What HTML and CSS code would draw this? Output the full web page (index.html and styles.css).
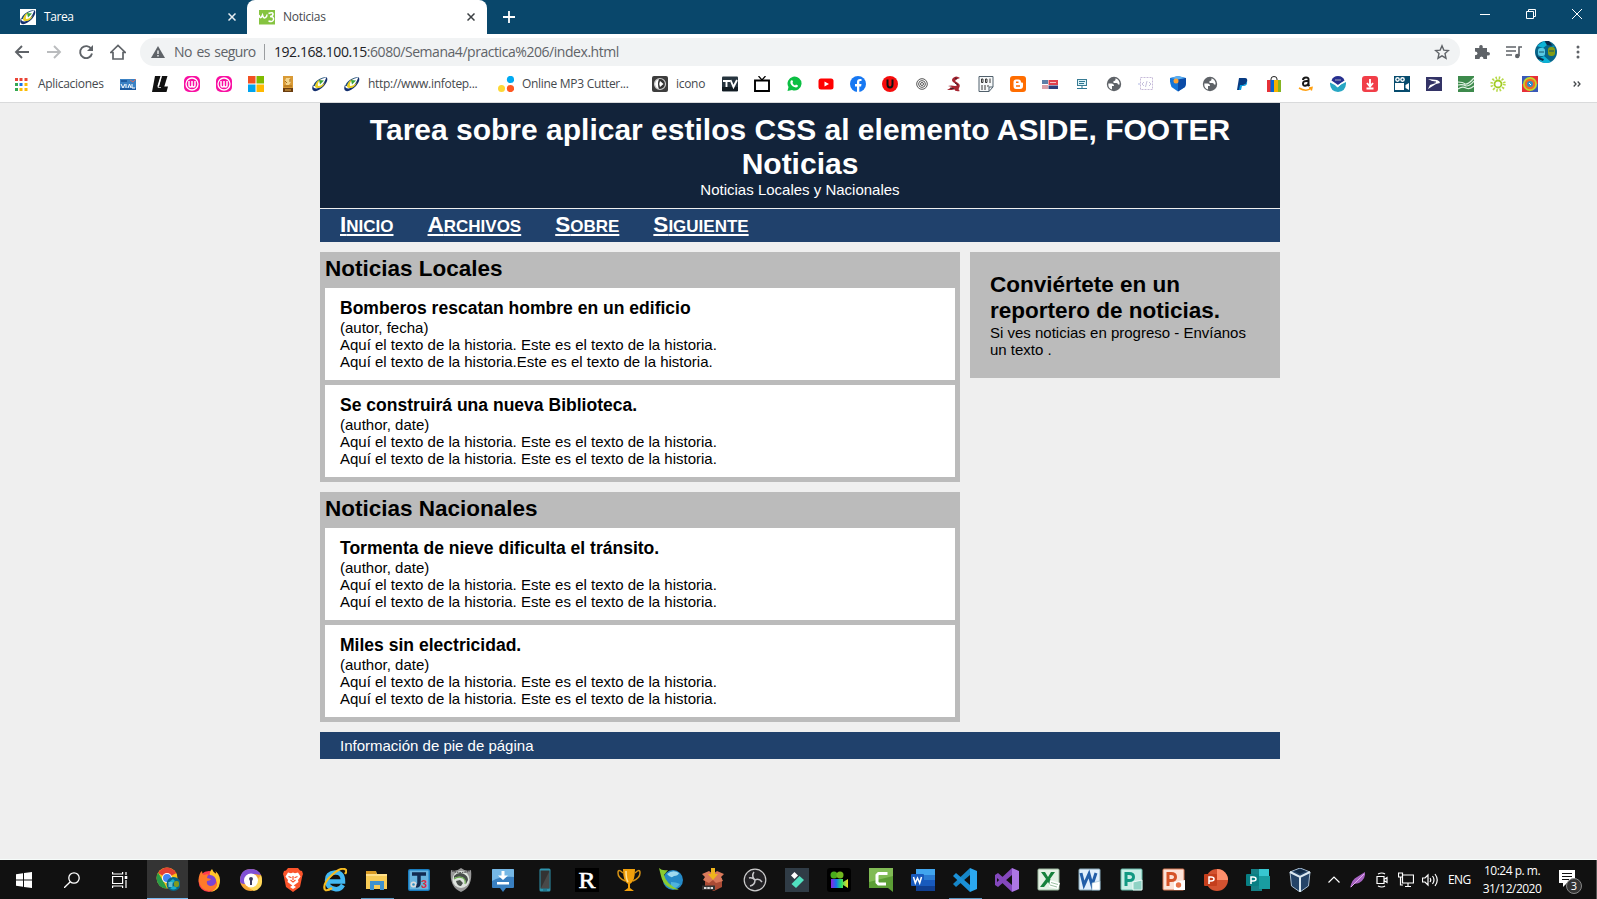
FILE: index.html
```html
<!DOCTYPE html>
<html lang="es">
<head>
<meta charset="utf-8">
<title>Noticias</title>
<link rel="stylesheet" href="styles.css">
</head>
<body>
<svg class="defs" width="0" height="0">
  <symbol id="infotep" viewBox="0 0 16 16"><path d="M14.500 1Q17 4 12 10 6 16 2 15-1 14 1 9q0 4 4 3.500Q11 11 14.500 1" fill="#14306f"/><path d="M1 10Q3 4 11 1.500q3-.5 3.500 0Q6 3 4 8q-1 3-3 2" fill="#1d4d78"/><path d="M3 10q1-5 6-7-4 4-3 7 4 0 7-4-2 6-7 6-3 0-3-2" fill="#e9cf22"/><path d="M7 4l5 .5-4 4z" fill="#3aa63a"/></symbol>
  <symbol id="wamp" viewBox="0 0 16 16"><rect width="16" height="16" rx="5" fill="#f90fa2"/><circle cx="8" cy="8" r="6" fill="none" stroke="#fff" stroke-width="1.3"/><path d="M5 5v4q0 2 1.500 2T8 9V5v4q0 2 1.500 2T11 9V5" fill="none" stroke="#fff" stroke-width="1.500"/></symbol>
  <symbol id="globe" viewBox="0 0 16 16"><circle cx="8" cy="8" r="7.200" fill="#5f6368"/><path d="M2.300 7.500h3.200q2.500 0 2.500 2.500H6v3.500Q2 12.500 2.300 7.500M9.500 2.300v1.200q0 1.500-2 1.500v2h3q1.500 0 1.500 1.500h1.600Q14 4 9.500 2.300" fill="#fff"/></symbol>
</svg>
<div class="browser">
  <div class="tabs">
    <div class="tab">
      <svg class="i16" viewBox="0 0 16 16"><rect width="16" height="16" fill="#fff"/><use href="#infotep"/></svg>
      <span class="tab-title">Tarea</span>
      <svg class="tab-x light" viewBox="0 0 8 8"><path d="M.5.5l7 7m0-7l-7 7"/></svg>
    </div>
    <div class="tab active">
      <svg class="i16" viewBox="0 0 16 16"><rect width="16" height="14.500" y="1" fill="#86c440"/><path d="M0 6q1 4 2.500 2l1-2q1 4 3 2.500Q8 8 8 5.500M9.500 4.500q5-2 4.500 1-.5 2-3 2 4 0 3.500 3T9.500 12" fill="none" stroke="#fff" stroke-width="1.500"/></svg>
      <span class="tab-title">Noticias</span>
      <svg class="tab-x" viewBox="0 0 8 8"><path d="M.5.5l7 7m0-7l-7 7"/></svg>
    </div>
    <svg class="plus" viewBox="0 0 12 12"><path d="M6 0v12M0 6h12" stroke="#fff" stroke-width="1.800"/></svg>
    <div class="winbtns">
      <svg viewBox="0 0 10 10"><path d="M0 5.500h10"/></svg>
      <svg viewBox="0 0 10 10"><path d="M.5 2.500h7v7h-7zM2.500 2.500v-2h7v7h-2"/></svg>
      <svg viewBox="0 0 10 10"><path d="M0 0l10 10m0-10L0 10"/></svg>
    </div>
  </div>
  <div class="toolbar">
    <svg class="nav-i" viewBox="0 0 16 16"><path d="M15 8H2m6-6L2 8l6 6"/></svg>
    <svg class="nav-i dim" viewBox="0 0 16 16"><path d="M1 8h13M8 2l6 6-6 6"/></svg>
    <svg class="nav-i" viewBox="0 0 16 16"><path d="M13.300 5A6 6 0 1 0 14 9.500"/><path d="M15 1v6H9z" fill="#5f6368" stroke="none"/></svg>
    <svg class="nav-i" viewBox="0 0 16 16"><path d="M.7 8.500L8 1.500l7.300 7H13V15H3V8.500z" stroke-width="1.700"/></svg>
    <div class="omnibox">
      <svg class="warn" viewBox="0 0 14 12"><path d="M7 0l7 12H0z" fill="#5f6368"/><path d="M7 4.500v3.500M7 9v1.500" stroke="#f1f3f4" stroke-width="1.400"/></svg>
      <span class="secure">No es seguro</span>
      <span class="sep"></span>
      <span class="url"><b>192.168.100.15</b>:6080/Semana4/practica%206/index.html</span>
      <svg class="star" viewBox="0 0 16 16"><path d="M8 1.800l1.800 4.300 4.700.4-3.500 3.100 1 4.600L8 11.800l-4 2.400 1-4.600L1.500 6.500l4.700-.4z" fill="none" stroke="#5f6368" stroke-width="1.400"/></svg>
    </div>
    <svg class="act" viewBox="0 0 16 16"><path d="M1 4h4.300Q4.800 1 7 1t1.700 3H13v4q3-.4 3 1.700T13 11.500V15H9.500q0-2.500-2-2.500T5.500 15H1v-3.800q2.500 0 2.500-1.800T1 7.500z" fill="#5f6368"/></svg>
    <svg class="act" viewBox="0 0 16 16"><path d="M0 3h10M0 7h10M0 11h6M13 12V3h3" fill="none" stroke="#5f6368" stroke-width="1.600"/><circle cx="11.300" cy="12" r="2.300" fill="#5f6368"/></svg>
    <svg class="avatar" viewBox="0 0 22 22"><circle cx="11" cy="11" r="11" fill="#07658a"/><path d="M2 5l7-5 3 4-4 3zM3 18l6-3 7 6q-8 3-13-3M15 2l5 4-4-1z" fill="#0cb3d6"/><path d="M10 0h4l4 5-6-1zM1 12l2 4 6 2-1 2-5-2z" fill="#092948"/><rect x="3" y="7" width="7" height="8" rx="2.500" fill="#58c9e3"/><rect x="13" y="6" width="7" height="9" rx="3" fill="#839d16"/><path d="M4 11h5M14 10h5" stroke="#14576a" fill="none"/></svg>
    <svg class="dots" viewBox="0 0 4 14"><circle cx="2" cy="2" r="1.500"/><circle cx="2" cy="7" r="1.500"/><circle cx="2" cy="12" r="1.500"/></svg>
  </div>
  <div class="bookmarks">
    <div class="bm apps"><svg viewBox="0 0 16 16"><path d="M2 3.500h3" stroke="#ea4335" stroke-width="3"/><path d="M6.500 3.500h3M11.500 3.500h3" stroke="#ea4335" stroke-width="3"/><path d="M2 8.500h3" stroke="#34a853" stroke-width="3"/><path d="M6.500 8.500h3" stroke="#1a73e8" stroke-width="3"/><path d="M11.500 8.500h3" stroke="#fbbc04" stroke-width="3"/><path d="M2 13.500h3" stroke="#34a853" stroke-width="3"/><path d="M6.500 13.500h3M11.500 13.500h3" stroke="#fbbc04" stroke-width="3"/></svg><span>Aplicaciones</span></div>
    <svg viewBox="0 0 16 16"><rect y="3" width="16" height="11" fill="#3b82c4"/><path d="M0 13h16M1 5h6" stroke="#1d5ba0" stroke-width="2"/><path d="M1 8l2 4 2-4M6 8v4M8 12l1.500-4L11 12M12 8v4h3" stroke="#fff" fill="none"/><path d="M10 4l3 2 3-3" stroke="#d56c62" fill="none"/></svg>
    <svg viewBox="0 0 16 16"><path d="M3 0h5.500L5.300 10.500H7L10 0h5.500l-3.200 10.500H16L14.500 16H0z" fill="#111"/><path d="M9 1L6 11.500h3" stroke="#fff" stroke-width=".7" fill="none"/></svg>
    <svg><use href="#wamp"/></svg>
    <svg><use href="#wamp"/></svg>
    <svg viewBox="0 0 16 16"><path fill="#f25022" d="M0 0h7.500v7.500H0z"/><path fill="#7fba00" d="M8.500 0H16v7.500H8.500z"/><path fill="#00a4ef" d="M0 8.500h7.500V16H0z"/><path fill="#ffb900" d="M8.500 8.500H16V16H8.500z"/></svg>
    <svg viewBox="0 0 16 16"><rect x="3" width="10" height="16" fill="#d99a35"/><path d="M6 2h4l1 4-2 3H6L5 5z" fill="#f4d58d"/><path d="M4 10h8M5 5l2 2M10 3v3" stroke="#a66b18"/><path d="M3 12h10v4H3z" fill="#6b3d10"/><path d="M5 14h6" stroke="#e6b04a"/></svg>
    <svg><use href="#infotep"/></svg>
    <div class="bm infotep"><svg><use href="#infotep"/></svg><span>http://www.infotep...</span></div>
    <div class="bm mp3"><svg viewBox="0 0 16 16"><circle cx="12.500" cy="3.500" r="3.600" fill="#00aaf2"/><circle cx="3.500" cy="12.500" r="3.500" fill="#fdd835"/><circle cx="12.500" cy="12.500" r="3.600" fill="#ff5722"/></svg><span>Online MP3 Cutter...</span></div>
    <div class="bm icono"><svg viewBox="0 0 16 16"><rect width="16" height="16" rx="2" fill="#3d3d3d"/><circle cx="8" cy="8" r="5.500" fill="#333" stroke="#ccc" stroke-width="1.200"/><path d="M7 3Q5 8 7 13 3 12 3 8t4-5" fill="#fff"/><path d="M8 5l3.500 3L8 11q-1.500-3 0-6" fill="#fff"/></svg><span>icono</span></div>
    <svg viewBox="0 0 16 16"><rect width="16" height="15" y=".5" rx="1" fill="#26343e"/><rect y="11" width="16" height="4" fill="#111b22"/><path d="M1 5h7M4.500 5v6M8.500 4l3 7 3.500-7" stroke="#fff" stroke-width="1.900" fill="none"/></svg>
    <svg viewBox="0 0 16 16"><path d="M1 4.500h14v10.500H1z" fill="none" stroke="#000" stroke-width="1.900"/><path d="M4.500 0L8 4l3.500-4" fill="none" stroke="#000" stroke-width="1.200"/></svg>
    <svg viewBox="0 0 16 16"><path d="M1.500 15l1-4A7 7 0 1 1 6 14z" fill="#0bbf43"/><path d="M5 4.500q1.500-1 2 1L6.500 7q1 2 2.500 2.500l1-1 2 1q0 2-2 2-4-.5-5.500-4-.5-2 .5-3" fill="#fff"/></svg>
    <svg viewBox="0 0 16 16"><rect x=".5" y="2.500" width="15" height="11" rx="2.500" fill="#f00"/><path d="M6.500 5.500v5L11 8z" fill="#fff"/></svg>
    <svg viewBox="0 0 16 16"><circle cx="8" cy="8" r="8" fill="#1778f2"/><path d="M7 16v-5.500H5V8h2V6q0-3 3-3h1.500v2H10Q9.300 5 9.300 6v2h2.200l-.4 2.500H9.300V16z" fill="#fff"/></svg>
    <svg viewBox="0 0 16 16"><circle cx="8" cy="8" r="8" fill="#f60c0c"/><path d="M5.500 3.500v5q0 3 2.500 3t2.500-3v-5" stroke="#111" stroke-width="2" fill="none"/></svg>
    <svg viewBox="0 0 16 16" fill="none" stroke="#555"><circle cx="8" cy="8" r="5.300"/><circle cx="8" cy="8" r="3.400"/><circle cx="8" cy="8" r="1.500"/></svg>
    <svg viewBox="0 0 16 16"><path d="M14 2Q10-1 7 2 5 4 7 6l3 2q2 2-1 2-4-1-7 0l4 1-5 3h5l2-1q1 3 6 2-2-1-1-3 2-3-1-5L9 5q1-2 5-3" fill="#a72531"/><path d="M9 2l2 1M4 12l4 1M9 7l3 2" stroke="#391b24"/></svg>
    <svg viewBox="0 0 16 16"><path d="M1 .5h14V11l-4 4.500H1z" fill="#f7f9fa" stroke="#51606c"/><path d="M11 15.500V11h4" fill="none" stroke="#51606c"/><path d="M3.500 3h1.500v3.500H3.500zM7.500 3H9v3.500H7.500zM12 2.500V7M4 9v5M7 9v5M10 9v2" stroke="#222" stroke-width=".9" fill="none"/></svg>
    <svg viewBox="0 0 16 16"><rect width="16" height="16" rx="3" fill="#ff6d00"/><path d="M3.500 6q0-2.500 2.500-2.500h2.500Q11 3.500 11 6.500h1q1 0 1 1V10q0 3-3 3H6q-2.500 0-2.500-3z" fill="#fff"/><path d="M6 6.300h2.500M6 10h4" stroke="#ff6d00" stroke-width="1.500"/></svg>
    <svg viewBox="0 0 16 16"><path d="M0 4h6v4H0z" fill="#5d7fa8"/><path d="M6.500 4H16v5H6.500z" fill="#e0424d"/><path d="M0 9h6v4H0z" fill="#dba0a8"/><path d="M6.500 9.500H16v3.500H6.500z" fill="#2d3f7c"/><path d="M8 6.500h6" stroke="#f6c4c8"/></svg>
    <svg viewBox="0 0 16 16"><rect x="3.500" y="3.500" width="9" height="6" fill="#dcf3f8" stroke="#397c94"/><path d="M5 5.500h6M5 7.500h5M8 10v3M3 12.500h10" stroke="#2d7691" fill="none"/></svg>
    <svg><use href="#globe"/></svg>
    <svg viewBox="0 0 16 16" fill="none"><rect x="2.500" y="1.500" width="12" height="12" stroke="#c6bad9" stroke-dasharray="2 1"/><path d="M6 6L4 8l2 2M11 6l2 2-2 2M9 5l-1.500 6" stroke="#c5c0dc"/><path d="M0 8h2" stroke="#b0b9e4"/></svg>
    <svg viewBox="0 0 16 16"><path d="M0 2l8-2 8 2q1 4-1 9l-7 4.500L1.500 11Q-.5 6 0 2" fill="#1776d8"/><path d="M8 3l8-1q1 4-1 9l-7 4.500z" fill="#0c4ca7"/><path d="M1 2l7-2 7 2-7 1.500z" fill="#5cb0f2"/><circle cx="6" cy="5" r="2.500" fill="#ffa333"/></svg>
    <svg><use href="#globe"/></svg>
    <svg viewBox="0 0 16 16"><path d="M5 2h6q3 0 2 4-1 3-4 3H7l-1 5H3z" fill="#083b82"/><path d="M13 5q1 5-4 5H8l-1 4H5l1-5h3q3 0 4-4" fill="#079cde"/></svg>
    <svg viewBox="0 0 16 16"><path d="M5 5V3q0-2.500 3-2.500T11 3v2" fill="none" stroke="#222"/><path d="M1 4h4v12H1z" fill="#e63138"/><path d="M4.500 4H8v12H4.500z" fill="#0864d3"/><path d="M8 4h4v12H8z" fill="#f6b200"/><path d="M12 4h3v12h-3z" fill="#84b522"/></svg>
    <svg viewBox="0 0 16 16"><path d="M5 4q0-2.500 3-2.500T10.500 4v5l1 1M10 5q-5-.5-5 2.500T8 9.500q2.500 0 2.500-3" fill="none" stroke="#171717" stroke-width="2"/><path d="M1 12q7 4 12 .5M11 12l3-.5-.7 3" fill="none" stroke="#ffa011" stroke-width="1.500"/></svg>
    <svg viewBox="0 0 16 16"><path d="M1.500 4.500Q3 0 8 0t6.500 4.500L8 9z" fill="#262f8f"/><path d="M0 6l4 1.500 4 3.500 3-2.500L16 6q.5 9-8 10Q-.5 15 0 6" fill="#28a7c4"/><path d="M0 5q4 1 7.500 4.500Q11 6 16 5q-5 2.500-8.500 6.500Q4 8 0 6.500" fill="#fff"/><path d="M5 4h6" stroke="#aab" /></svg>
    <svg viewBox="0 0 16 16"><rect width="16" height="16" rx="3" fill="#f13e48"/><path d="M8 3v7M5 7l3 3.500L11 7M4.500 12.500h7" stroke="#fff" stroke-width="1.900" fill="none"/></svg>
    <svg viewBox="0 0 16 16"><rect width="16" height="16" fill="#064b6d"/><g fill="none" stroke="#fff" stroke-width="1.400"><circle cx="3.500" cy="3.500" r="1.700"/><circle cx="8.500" cy="3.500" r="1.700"/></g><path d="M1 7h9v7H1zM11.500 9L15 7v7l-3.500-2z" fill="#fff"/></svg>
    <svg viewBox="0 0 16 16"><rect width="16" height="14" y="1" fill="#333366"/><path d="M2 3l9 1q3 1 3 3l-4 1-8 5 2-4 6-2z" fill="#fff"/><path d="M4 5.300l6 .7" stroke="#333366"/></svg>
    <svg viewBox="0 0 16 16"><rect width="16" height="16" fill="#3d8a4c"/><path d="M0 6q5 0 7 2 3 1 9-6M0 9q5-1 8 1 4 0 8-5M0 13q4-3 8-1t8-2" stroke="#dff0e2" stroke-width="1.200" fill="none"/></svg>
    <svg viewBox="0 0 16 16" fill="none"><circle cx="8" cy="8" r="3.500" stroke="#9fca22" stroke-width="1.800"/><circle cx="8" cy="8" r="6.300" stroke="#b7d947" stroke-width="2.800" stroke-dasharray="1.500 1.800"/></svg>
    <svg viewBox="0 0 16 16"><path d="M0 0h8v8H0zM8 8h8v8H8z" fill="#3959b8"/><path d="M8 0h8v8H8zM0 8h8v8H0z" fill="#e72f39"/><circle cx="8" cy="8" r="7" fill="#c3d92b"/><circle cx="8" cy="8" r="5.300" fill="#f06b24"/><circle cx="8" cy="8" r="3" fill="#2e8bc8"/><path d="M7 7l2 2" stroke="#fff"/></svg>
    <svg class="more" viewBox="0 0 8 6"><path d="M.7.5L3 3 .7 5.500M4.700.5L7 3 4.700 5.500"/></svg>
  </div>
</div>

<div class="page">
  <div class="container">
    <header class="site-header">
      <h1>Tarea sobre aplicar estilos CSS al elemento ASIDE, FOOTER<br>Noticias</h1>
      <p>Noticias Locales y Nacionales</p>
    </header>
    <nav class="site-nav"><a>Inicio</a><a>Archivos</a><a>Sobre</a><a>Siguiente</a></nav>
    <div class="columns">
      <main>
        <section>
          <h2>Noticias Locales</h2>
          <article><h3>Bomberos rescatan hombre en un edificio</h3><p>(autor, fecha)</p><p>Aquí el texto de la historia. Este es el texto de la historia.</p><p>Aquí el texto de la historia.Este es el texto de la historia.</p></article>
          <article><h3>Se construirá una nueva Biblioteca.</h3><p>(author, date)</p><p>Aquí el texto de la historia. Este es el texto de la historia.</p><p>Aquí el texto de la historia. Este es el texto de la historia.</p></article>
        </section>
        <section>
          <h2>Noticias Nacionales</h2>
          <article><h3>Tormenta de nieve dificulta el tránsito.</h3><p>(author, date)</p><p>Aquí el texto de la historia. Este es el texto de la historia.</p><p>Aquí el texto de la historia. Este es el texto de la historia.</p></article>
          <article><h3>Miles sin electricidad.</h3><p>(author, date)</p><p>Aquí el texto de la historia. Este es el texto de la historia.</p><p>Aquí el texto de la historia. Este es el texto de la historia.</p></article>
        </section>
      </main>
      <aside>
        <h2>Conviértete en un reportero de noticias.</h2>
        <p>Si ves noticias en progreso - Envíanos un texto .</p>
      </aside>
    </div>
    <footer>Información de pie de página</footer>
  </div>
</div>

<div class="taskbar">
  <div class="sys">
    <div><svg class="i16" viewBox="0 0 16 16"><path d="M0 2.200l7-1v6.300H0zM8 1l8-1v7.500H8zM0 8.500h7v6.300l-7-1zM8 8.500h8V16l-8-1z" fill="#fff"/></svg></div>
    <div><svg class="i16" viewBox="0 0 16 16" fill="none" stroke="#fff" stroke-width="1.300"><circle cx="10" cy="6" r="5.200"/><path d="M6.300 9.700L0 16"/></svg></div>
    <div><svg class="i16" viewBox="0 0 16 16" fill="none" stroke="#fff" stroke-width="1.200"><path d="M.6 4.500h10v7H.6zM.6 0v2h10V0M.6 16v-2h10v2M14 0v3M14 8v8"/><path d="M14 4v3" stroke-width="2.600"/></svg></div>
  </div>
  <div class="apps-row">
    <div class="current"><svg viewBox="0 0 24 24"><circle cx="11" cy="11" r="10.500" fill="#fbc116"/><path d="M11 11L2 6Q6 .5 11 .5T20.500 6z" fill="#e34133"/><path d="M2 5.500l6 10 3 6Q1 21 .5 11 .5 8 2 5.500" fill="#299b48"/><circle cx="11" cy="11" r="5" fill="#fff"/><circle cx="11" cy="11" r="4" fill="#4285f4"/><circle cx="17.500" cy="17" r="7" fill="#086687"/><path d="M12 16l5-4 2 2-3 3zM14 21l4-2 3 2q-4 3-7 0" fill="#16b0cf"/><rect x="18" y="14" width="5" height="6" rx="2" fill="#819a1e"/><rect x="12.500" y="15" width="4" height="5" fill="#64bdd1"/></svg></div>
    <div><svg viewBox="0 0 24 24"><circle cx="12" cy="13.500" r="10.500" fill="#ff3d50"/><path d="M15 1q1 3 4 5 0-2-.5-3Q24 8 22.800 15q-1 8-9.500 9 7-3 6.500-9-.5-6-6.800-7.500Q12 4 15 1" fill="#ffc629"/><circle cx="13" cy="13" r="6" fill="#7b45d2"/><path d="M1.500 12Q2 5 5 3q0 3 2 4l4-1-1 4 4 1q-1 2-4 2-1 4 3 5 5 0 6.500-4 1 9-7.500 9Q3 22 1.500 12" fill="#ff7a2a"/></svg></div>
    <div><svg viewBox="0 0 24 24"><circle cx="12" cy="12" r="11" fill="#f5a536"/><path d="M1 13Q1 1 12 1q7 0 10 6l-7-1Q5 5 6 16 1 16 1 13" fill="#804fd4"/><path d="M22 7q4 13-7 16l-7-4q9 2 11-8z" fill="#ffd85a"/><circle cx="12" cy="12.500" r="7" fill="#fff"/><path d="M12 9q2 0 2 2l-1 2v4h-2v-4l-1-2q0-2 2-2" fill="#3b395b"/></svg></div>
    <div><svg viewBox="0 0 24 24"><path d="M7 0h10l2 2.500 2 .5 1 3-.7 2L19 19l-7 5-7-5L2.700 8 2 6l1-3 2-.5z" fill="#fb542b"/><path d="M7 4.500l3 .7 2-.7 2 .7 3-.7 2.500 4L17 12l.5 2-5.500 4-5.500-4 .5-2-2.500-3.500zM12 17l3 2-3 2-3-2z" fill="#fff"/><path d="M7.500 8.500l3 1.200M16.500 8.500l-3 1.200M12 8v4M9.500 12l2.500 2 2.500-2" stroke="#fb542b" stroke-width="1.200" fill="none"/></svg></div>
    <div><svg viewBox="0 0 24 24"><path d="M20 17Q17 22 12 21 4 20 4 12.500T12 4.500t8 9H6" fill="none" stroke="#42b8f2" stroke-width="4.500"/><path d="M2 22Q-1 16 9 7t14-5q1 1-1 4M2 22q3 1 7-2" fill="none" stroke="#f5bc23" stroke-width="2.200"/></svg></div>
    <div class="running"><svg viewBox="0 0 24 24"><path d="M1 3h10l1 3h10v15H1z" fill="#f7cb57"/><path d="M1 3h10v3H1z" fill="#d99b25"/><path d="M1 7h21" stroke="#ffdf89" stroke-width="2"/><path d="M5 13h14v9h-4v-5H9v5H5z" fill="#3d91d0"/></svg></div>
    <div><svg viewBox="0 0 24 24"><rect x="1" y="1" width="22" height="22" rx="2" fill="#197dc0"/><rect x="2.500" y="2.500" width="19" height="19" fill="#6ab5df"/><path d="M5 6h14" stroke="#122b50" stroke-width="3.500"/><path d="M12 6v9q0 3-3 3" stroke="#122b50" stroke-width="3.500" fill="none"/><text x="14" y="19.500" font-size="11" font-family="Liberation Sans" font-weight="bold" fill="#d82e43">3</text><circle cx="6.500" cy="16.500" r="3" fill="#ddd"/><circle cx="6.500" cy="16.500" r="1.300" fill="#2f91c3"/></svg></div>
    <div><svg viewBox="0 0 24 24"><path d="M2 2q5 2 10-2 5 4 10 2 2 17-10 22Q0 19 2 2" fill="#999"/><circle cx="12" cy="11.500" r="8.500" fill="#dfe4df"/><path d="M5 8q4-5 10-2 4 2 4 6l-2 4q0-5-4-7-4-1-8 1M7 13l4-1 3 3-2 3q-4 0-5-5" fill="#484e4a"/><path d="M5 11q4-3 9-1 3 2 2 6" fill="none" stroke="#6cae50" stroke-width="1.200"/><path d="M3 3q9 3 18 0" stroke="#333" fill="none" stroke-dasharray="1.500 1"/></svg></div>
    <div><svg viewBox="0 0 24 24"><path d="M2 1h20q1 0 1 1v17q0 1-1 1h-7l-3 4-3-4H2q-1 0-1-1V2q0-1 1-1" fill="#397fc0"/><path d="M2 1h20q1 0 1 1v7Q10 8 1 13V2q0-1 1-1" fill="#75b7e5"/><path d="M10.500 3h3v4.500h3.500L12 12 7 7.500h3.500zM6 14h12v2.500H6z" fill="#fff"/></svg></div>
    <div><svg viewBox="0 0 24 24"><rect x="6.500" y=".5" width="11" height="23" rx="1.500" fill="#2e94ad"/><rect x="7.500" y="2.500" width="9" height="18" fill="#333"/><path d="M8 20l8-16v16z" fill="#494949"/><path d="M10 22h4" stroke="#126078"/></svg></div>
    <div><svg viewBox="0 0 24 24"><rect width="24" height="24" fill="#000"/><text x="12" y="20" text-anchor="middle" font-family="Liberation Serif" font-size="24" fill="#fff" stroke="#fff" stroke-width=".6" textLength="17" lengthAdjust="spacingAndGlyphs">R</text></svg></div>
    <div><svg viewBox="0 0 24 24"><path d="M6 1h12q0 13-5 15v4l4 3H7l4-3v-4Q6 14 6 1" fill="#f2a00b"/><path d="M6 5Q1 0 1 5t7 8M18 5q5-5 5 0t-7 8" fill="none" stroke="#d49115" stroke-width="1.500"/><path d="M9 3q0 8 2 11" stroke="#ffe29a" fill="none" stroke-width="1.500"/></svg></div>
    <div><svg viewBox="0 0 24 24"><circle cx="14" cy="12" r="10" fill="#258ac8"/><path d="M8 6q6-5 12-1-1 3-5 3-3 3-7-2" fill="#9fdaef"/><path d="M12 14q5 0 9 2-4 6-9 3z" fill="#4fb3dc"/><path d="M0 0q3 3 9 2L5 7q2 9 15 15Q5 21 2 8z" fill="#8acb31"/></svg></div>
    <div><svg viewBox="0 0 24 24"><path d="M4 10l8-3 9 3v9l-8 4-9-4z" fill="#a94b35"/><path d="M4 9L1 6l7-3 4 3 4-3 7 3-3 3 2 4-7 2-3-3-4 3-6-3z" fill="#d9795b"/><path d="M10 0h4v6h3l-5 6-5-6h3z" fill="#efb41d"/><path d="M1 17.500h13V22H1z" fill="#333"/><path d="M3 20h9" stroke="#ddd" stroke-width="2" stroke-dasharray="2.500 .8"/></svg></div>
    <div><svg viewBox="0 0 24 24"><circle cx="12" cy="12" r="10.800" fill="#222124" stroke="#ccc" stroke-width="1.200"/><path d="M11 4Q8 8 12 12q4-2 7 2M12 12q0 5-5 6M6 10q3-1 6 2" fill="none" stroke="#c7c6c9" stroke-width="1.500"/></svg></div>
    <div><svg viewBox="0 0 24 24"><rect width="24" height="24" fill="#303c46"/><path d="M9.500 4l3.500 3.500L9.500 11 6 7.500z" fill="#fff"/><path d="M14.500 8l4.500 4-8 8-4.500-4z" fill="#51e1c0"/></svg></div>
    <div><svg viewBox="0 0 24 24"><defs><linearGradient id="rain"><stop stop-color="#8d24e2"/><stop offset=".3" stop-color="#1672f0"/><stop offset=".6" stop-color="#28de69"/><stop offset="1" stop-color="#f1d822"/></linearGradient></defs><rect width="24" height="24" rx="3" fill="#000"/><circle cx="7" cy="7" r="3.500" fill="#4aad1c"/><circle cx="13" cy="7" r="3.500" fill="#71b61f"/><path d="M4 11h12v3l5-3v9l-5-3v3H4z" fill="url(#rain)"/></svg></div>
    <div><svg viewBox="0 0 24 24"><path d="M0 0h24v24l-5-4H0z" fill="#5c9e35"/><path d="M0 0h24v8L0 14z" fill="#81bb55"/><path d="M17 7V5.500H9.500L8 7v7.500L9.500 16H17" stroke="#fff" stroke-width="3" fill="none"/></svg></div>
    <div><svg viewBox="0 0 24 24"><path d="M5 1h19v22H5z" fill="#2b7cd3"/><path d="M5 1h19v6H5z" fill="#41a5ee"/><path d="M5 12h19v11H5z" fill="#185abd"/><path d="M5 18h19v5H5z" fill="#103f91"/><rect y="6" width="13" height="12" rx="1" fill="#185abd"/><path d="M2.500 9l1.800 6 2.200-5 2.200 5 1.800-6" fill="none" stroke="#fff" stroke-width="1.500"/></svg></div>
    <div class="running"><svg viewBox="0 0 24 24"><path d="M17 0l7 3v18l-7 3z" fill="#2ba7ef"/><path d="M17 0v7L3 19l-3-3z" fill="#1686c7"/><path d="M17 24v-7L3 5 0 8z" fill="#1b91d8"/></svg></div>
    <div><svg viewBox="0 0 24 24"><path d="M17 0l7 3v18l-7 3z" fill="#ad76e4"/><path d="M17 0v7L3 19l-3-2V7l3-2 14 12v7L2 10v4z" fill="#8448bd"/></svg></div>
    <div><svg viewBox="0 0 24 24"><rect x="1" y="1" width="21" height="21" rx="1" fill="#e4f1e5" stroke="#9bb99e"/><path d="M4 4h4l3 5 3-5h4l-5 7 5 8h-4l-3-5-4 5H3l6-8z" fill="#16813c"/><path d="M13 12l10 3-2 6-9-2z" fill="#fff"/><path d="M14 14.500l7 2M13 17l7 2" stroke="#9cc0a2"/></svg></div>
  </div>
  <div class="apps-row second">
    <div><svg viewBox="0 0 24 24"><rect x="1" y="1" width="21" height="21" rx="1" fill="#e1eefc" stroke="#8ab"/><path d="M3 5l3 12 5-11 3 11 4-12" fill="none" stroke="#235da8" stroke-width="3"/><path d="M14 15l8-2v9h-8z" fill="#fff" stroke="#9bc" stroke-width=".6"/></svg></div>
    <div><svg viewBox="0 0 24 24"><rect x="1" y="1" width="21" height="21" rx="1" fill="#c9eee6" stroke="#6ba"/><path d="M6 18V5.500h3q4.500 0 4.500 3.500T9 12.500H6" fill="none" stroke="#119982" stroke-width="3"/><path d="M13 14l9-2v10h-9z" fill="#8fd3c5" stroke="#fff" stroke-width=".8"/></svg></div>
    <div><svg viewBox="0 0 24 24"><rect x="1" y="1" width="21" height="21" rx="1" fill="#fce3d8" stroke="#d97852"/><path d="M6 18V5.500h3q4.500 0 4.500 3.500T9 12.500H6" fill="none" stroke="#d55327" stroke-width="3"/><path d="M12 14l11-2v10H12z" fill="#fff"/><circle cx="16.500" cy="17" r="2.700" fill="#e77348"/></svg></div>
    <div><svg viewBox="0 0 24 24"><circle cx="13" cy="12" r="11" fill="#d35230"/><path d="M13 1a11 11 0 0 1 11 11H13z" fill="#ff8f6b"/><rect y="6" width="13" height="12" rx="1" fill="#c43e1c"/><path d="M5 16V9h2q3 0 3 2t-3 2H5" stroke="#fff" stroke-width="1.500" fill="none"/></svg></div>
    <div><svg viewBox="0 0 24 24"><path d="M5 1h11v22H5z" fill="#158187"/><path d="M13 1h10v11H13z" fill="#37c6d0"/><path d="M13 8h11v13H13z" fill="#199da1"/><rect y="6" width="13" height="12" rx="1" fill="#087f83"/><path d="M5 16V9h2q3 0 3 2t-3 2H5" stroke="#fff" stroke-width="1.500" fill="none"/></svg></div>
    <div><svg viewBox="0 0 24 24"><path d="M12 0l10 4-1.500 14L12 24l-8.500-6L2 4z" fill="#244468" stroke="#a8bdd0"/><path d="M2 4l10 5 10-5M12 9v15" stroke="#dce9f1" stroke-width="2" fill="none"/><path d="M6 3l6-2 6 2-6 3z" fill="#122b46"/></svg></div>
  </div>
  <div class="tray">
    <svg viewBox="0 0 16 16" class="ln"><path d="M2.500 10.500L8 5l5.500 5.500"/></svg>
    <svg viewBox="0 0 16 16"><path d="M0 16Q2 7 7 5l8-5q1 7-6 11-3 1-5 .5z" fill="#a764c2"/><path d="M1 15L14 2" stroke="#e4aaed"/></svg>
    <svg viewBox="0 0 16 16" class="ln"><path d="M4 2q4-2 7 0M4 14q4 2 7 0M3 4.500h7v7H3zM10 7.500l3-2v5l-3-2"/></svg>
    <svg viewBox="0 0 16 16" class="ln"><path d="M4.500 3h11v8h-11zM7 14.500h6M10 11v3M.5 1h4v4h-4zM2.500 5v8H5"/></svg>
    <svg viewBox="0 0 16 16" class="ln"><path d="M.5 6h2.500l3-3v10L3 10H.5zM8 6q1.500 2 0 4M10.500 4q3 4 0 8M13 2q4.500 6 0 12"/></svg>
  </div>
  <span class="lang">ENG</span>
  <div class="clock"><span>10:24 p. m.</span><span>31/12/2020</span></div>
  <svg class="notif" viewBox="0 0 26 26"><path d="M1 2h16v13H9l-4 4v-4H1z" fill="#fff"/><path d="M4 5.500h10M4 8.500h10M4 11.500h7" stroke="#111"/><circle cx="16" cy="18" r="7.500" fill="#333" stroke="#888"/><text x="16" y="22" text-anchor="middle" font-family="Open Sans" font-size="11" fill="#fff">3</text></svg>
  <span class="peek"></span>
</div>
</body>
</html>
```
FILE: styles.css
```css
* { box-sizing: border-box; margin: 0; padding: 0; }
body {
  width: 1597px;
  height: 899px;
  overflow: hidden;
  display: flex;
  flex-direction: column;
  background: #efefef;
  font-family: "Liberation Sans", Arial, sans-serif;
  font-size: 15px;
  line-height: 17px;
}
svg { display: block; flex: none; }
.defs { position: absolute; }
.i16 { width: 16px; height: 16px; }

/* browser window */
.browser { height: 103px; background: #fff; border-bottom: 1px solid #d9dadb; font-family: "Open Sans", sans-serif; }
.tabs { height: 34px; background: #09476b; display: flex; align-items: center; }
.tab { width: 247px; height: 34px; display: flex; align-items: center; padding: 0 11px 0 20px; color: #fff; font-size: 12px; }
.tab.active { width: 240px; background: #fff; color: #45494d; border-radius: 8px 8px 0 0; padding: 0 12px; }
.tab-title { margin: -1px 0 0 8px; letter-spacing: -0.4px; flex: 1; }
.active .tab-title { letter-spacing: -0.25px; }
.tab-x { width: 8px; height: 8px; fill: none; stroke: #3c4043; stroke-width: 1.5; }
.tab-x.light { stroke: #e8eef2; }
.plus { width: 12px; height: 12px; margin-left: 16px; }
.winbtns { display: flex; gap: 36px; margin: -6px 15px 0 auto; }
.winbtns svg { width: 10px; height: 10px; fill: none; stroke: #fff; }
.toolbar { height: 36px; display: flex; align-items: center; padding: 0 17px 0 14px; gap: 16px; }
.nav-i { width: 16px; height: 16px; fill: none; stroke: #5f6368; stroke-width: 1.9; }
.nav-i.dim { stroke: #babcbe; }
.omnibox { flex: none; width: 1320px; height: 28px; margin: 0 -2px; border-radius: 14px; background: #f1f3f4; display: flex; align-items: center; padding: 0 10px 0 11px; font-size: 14px; }
.warn { width: 14px; height: 12px; }
.secure { width: 90px; margin: -1px 0 0 9px; color: #5f6368; letter-spacing: -0.6px; word-spacing: 1.6px; white-space: nowrap; }
.sep { width: 1px; height: 16px; background: #9a9da0; }
.url { margin: -1px 0 0 9px; color: #5f6368; letter-spacing: -0.45px; white-space: nowrap; }
.url b { color: #202124; font-weight: 400; }
.star { width: 16px; height: 16px; margin-left: auto; }
.act { width: 16px; height: 16px; }
.avatar { width: 22px; height: 22px; margin: 0 -3px; }
.dots { width: 4px; height: 14px; fill: #5f6368; margin-left: 6px; }
.bookmarks { height: 28px; display: flex; align-items: center; gap: 16px; padding: 0 16px 0 13px; }
.bookmarks svg { width: 16px; height: 16px; }
.bm { display: flex; align-items: center; flex: none; gap: 8px; font-size: 12px; color: #45494d; letter-spacing: -0.3px; white-space: nowrap; }
.bm span { margin-top: -1px; }
.bm.apps { width: 91px; gap: 9px; }
.bm.infotep { width: 138px; }
.bm.mp3 { width: 138px; }
.bm.icono { width: 54px; }
.bookmarks svg.more { width: 8px; height: 6px; margin-left: auto; fill: none; stroke: #45494d; stroke-width: 1.3; }

/* news page */
.page { height: 757px; border-bottom: 1px solid #f6fcfa; }
.container { width: 960px; margin-left: 320px; }
.site-header { height: 105px; padding-top: 10px; background: #12233a; color: #fff; text-align: center; }
h1 { font-size: 30px; line-height: 34px; }
.site-nav { display: flex; gap: 34px; height: 34px; border-top: 1px solid #efefef; background: #20416c; color: #fff; padding: 3px 20px 0; font-size: 17px; line-height: 26px; font-weight: 700; text-transform: uppercase; }
.site-nav a { text-decoration: underline; text-decoration-thickness: 2px; text-underline-offset: 2px; }
.site-nav a::first-letter { font-size: 22.5px; line-height: 26px; }
.columns { display: flex; align-items: flex-start; gap: 10px; margin-top: 10px; }
main { width: 640px; display: flex; flex-direction: column; gap: 10px; }
section { height: 230px; background: #bbb; padding: 4px 5px 5px; display: flex; flex-direction: column; gap: 5px; }
h2 { font-size: 22.5px; line-height: 26px; }
section h2 { margin-bottom: 1px; }
article { height: 92px; background: #fff; padding: 10px 15px; }
h3 { font-size: 17.55px; line-height: 21px; }
aside { width: 310px; height: 126px; padding: 20px; background: #bbb; }
footer { height: 27px; margin-top: 10px; padding: 5px 20px; background: #20416c; color: #fff; }

/* taskbar */
.taskbar { height: 39px; background: #111; display: flex; align-items: center; color: #fff; font-family: "Open Sans", sans-serif; font-size: 12px; }
.sys { display: flex; }
.sys div { width: 48px; display: flex; justify-content: center; }
.apps-row { display: flex; height: 39px; margin-left: 3px; }
.apps-row > div { width: 42px; height: 39px; display: flex; align-items: center; justify-content: center; }
.apps-row svg { width: 24px; height: 24px; }
.apps-row .current { width: 41px; background: #343434; border-bottom: 1px solid #76b9ed; }
.apps-row .running { background: linear-gradient(#5794bd, #5794bd) center bottom / 33px 1px no-repeat; }
.apps-row.second { margin-left: -1px; }
.tray { display: flex; gap: 8px; margin-left: 5px; }
.tray svg { width: 16px; height: 16px; }
.tray .ln { fill: none; stroke: #fff; stroke-width: 1.2; }
.lang { margin-left: 10px; width: 27px; letter-spacing: -0.6px; }
.clock { width: 74px; display: flex; flex-direction: column; align-items: center; letter-spacing: -0.5px; line-height: 18px; white-space: nowrap; }
.notif { width: 26px; height: 26px; margin: 3px 0 0 9px; }
.peek { width: 1px; height: 39px; margin-left: auto; background: #555; }
```
